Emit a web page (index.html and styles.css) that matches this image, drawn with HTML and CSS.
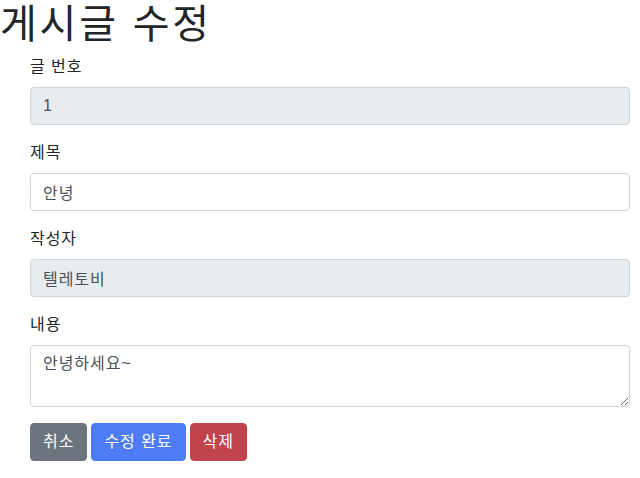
FILE: index.html
```html
<!DOCTYPE html>
<html lang="ko">
<head>
<meta charset="utf-8">
<title>게시글 수정</title>
<link rel="stylesheet" href="styles.css">
</head>
<body>
<h1 class="title">게시글 수정</h1>
<form class="form">
  <div class="group">
    <label class="label">글 번호</label>
    <input class="control" type="text" value="1" disabled>
  </div>
  <div class="group">
    <label class="label">제목</label>
    <input class="control" type="text" value="안녕">
  </div>
  <div class="group">
    <label class="label">작성자</label>
    <input class="control" type="text" value="텔레토비" disabled>
  </div>
  <div class="group">
    <label class="label">내용</label>
    <textarea class="control area" rows="2">안녕하세요~</textarea>
  </div>
  <div class="actions">
    <button type="button" class="btn btn-gray">취소</button>
    <button type="button" class="btn btn-blue">수정 완료</button>
    <button type="button" class="btn btn-red">삭제</button>
  </div>
</form>
</body>
</html>
```

FILE: styles.css
```css
* { box-sizing: border-box; }
body {
  margin: 0;
  font-family: "Liberation Sans", "Noto Sans CJK KR", sans-serif;
  font-size: 16px;
  line-height: 1.5;
  color: #212529;
  background: #fff;
  letter-spacing: 0.06em;
}
.title {
  height: 48px;
  margin: 0 0 7px 0;
  font-size: 40px;
  font-weight: 400;
  line-height: 1.2;
  letter-spacing: 0.07em;
}
.form {
  width: 600px;
  margin-left: 30px;
}
.group {
  margin-bottom: 16px;
}
.label {
  display: block;
  margin-bottom: 8px;
}
.control {
  display: block;
  width: 100%;
  height: 38px;
  padding: 6px 12px;
  font-family: inherit;
  font-size: 16px;
  line-height: 1.5;
  letter-spacing: inherit;
  color: #495057;
  background: #fff;
  border: 1px solid #ced4da;
  border-radius: 4px;
  margin: 0;
}
.control:disabled {
  background: #e9ecef;
  color: #495057;
  opacity: 1;
}
.area {
  height: 62px;
  resize: vertical;
}
.actions {
  display: flex;
  gap: 4px;
}
.btn {
  height: 38px;
  font-family: inherit;
  font-size: 16px;
  line-height: 1.5;
  letter-spacing: inherit;
  padding: 6px 12px;
  border: 1px solid transparent;
  border-radius: 4px;
  color: #fff;
  cursor: pointer;
}
.btn-gray { background: #6c757d; border-color: #6c757d; }
.btn-blue { background: #4e7cf6; border-color: #4e7cf6; }
.btn-red { background: #c1444c; border-color: #c1444c; }
```
